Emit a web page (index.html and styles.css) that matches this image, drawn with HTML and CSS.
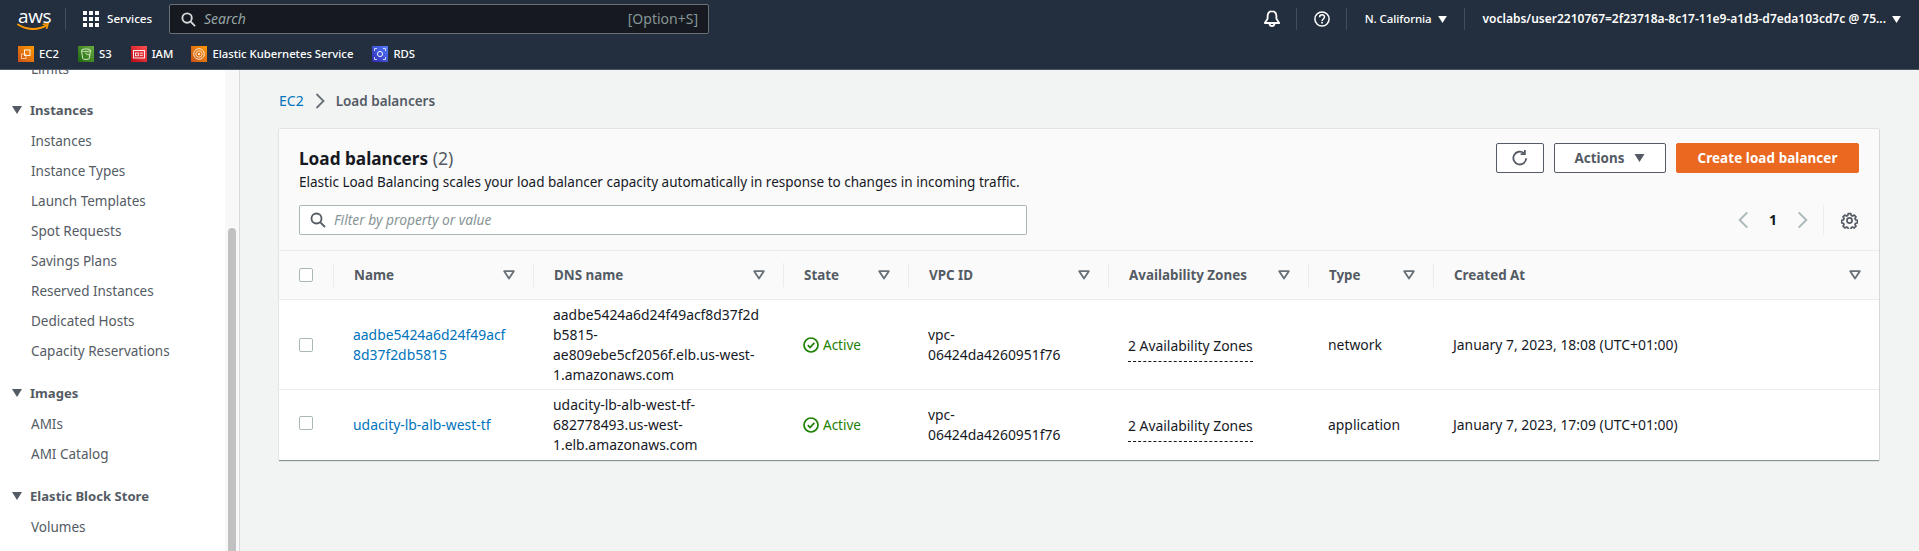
FILE: index.html
```html
<!DOCTYPE html>
<html lang="en">
<head>
<meta charset="utf-8">
<title>Load balancers | EC2</title>
<link rel="stylesheet" href="styles.css">
</head>
<body>
<svg class="defs" width="0" height="0" aria-hidden="true">
  <defs>
    <linearGradient id="g-orange" x1="0" y1="1" x2="1" y2="0"><stop offset="0" stop-color="#c8511b"/><stop offset="1" stop-color="#ff9900"/></linearGradient>
    <linearGradient id="g-green" x1="0" y1="1" x2="1" y2="0"><stop offset="0" stop-color="#1b660f"/><stop offset="1" stop-color="#6cae3e"/></linearGradient>
    <linearGradient id="g-red" x1="0" y1="1" x2="1" y2="0"><stop offset="0" stop-color="#bd0816"/><stop offset="1" stop-color="#ff5252"/></linearGradient>
    <linearGradient id="g-blue" x1="0" y1="1" x2="1" y2="0"><stop offset="0" stop-color="#2e27ad"/><stop offset="1" stop-color="#527fff"/></linearGradient>
    <symbol id="i-sort" viewBox="0 0 12 10"><path d="M1.2 1.2h9.6L6 8.6z" fill="none" stroke="#687078" stroke-width="1.8" stroke-linejoin="round"/></symbol>
    <symbol id="i-check" viewBox="0 0 16 16"><circle cx="8" cy="8" r="7" fill="none" stroke="#1d8102" stroke-width="1.7"/><path d="M4.8 8.2l2.3 2.3 4.2-4.6" fill="none" stroke="#1d8102" stroke-width="1.7"/></symbol>
  </defs>
</svg>

<header class="topbar">
  <div class="topbar-row">
    <div class="logo">
      <span class="logo-text">aws</span>
      <svg class="logo-smile" viewBox="0 0 32 9"><path d="M1 1.5c8 5.4 20 6 28 1.2" fill="none" stroke="#f90" stroke-width="2" stroke-linecap="round"/><path d="M26.300 1.200l4.700-.4-1.300 4.500" fill="none" stroke="#f90" stroke-width="1.600" stroke-linecap="round"/></svg>
    </div>
    <span class="nav-sep sep-logo"></span>
    <svg class="grid-icon" viewBox="0 0 16 16" fill="#fff">
      <rect x="0" y="0" width="4" height="4"/><rect x="6" y="0" width="4" height="4"/><rect x="12" y="0" width="4" height="4"/>
      <rect x="0" y="6" width="4" height="4"/><rect x="6" y="6" width="4" height="4"/><rect x="12" y="6" width="4" height="4"/>
      <rect x="0" y="12" width="4" height="4"/><rect x="6" y="12" width="4" height="4"/><rect x="12" y="12" width="4" height="4"/>
    </svg>
    <span class="services">Services</span>
    <div class="search">
      <svg class="search-icon" viewBox="0 0 16 16"><circle cx="6.500" cy="6.500" r="5" fill="none" stroke="#d5dbdb" stroke-width="2"/><path d="M10.300 10.300l4.700 4.700" stroke="#d5dbdb" stroke-width="2"/></svg>
      <span class="search-text">Search</span>
      <span class="search-key">[Option+S]</span>
    </div>
    <div class="top-right">
      <svg class="bell" viewBox="0 0 18 18"><path d="M9 1.200c-2.900 0-4.400 2.200-4.400 5v2.600L1.800 13h14.400l-2.800-4.200V6.200c0-2.800-1.500-5-4.400-5z" fill="none" stroke="#fff" stroke-width="1.800" stroke-linejoin="round"/><path d="M6.500 13.500a2.500 2.500 0 0 0 5 0" fill="none" stroke="#fff" stroke-width="1.800"/></svg>
      <span class="nav-sep sep-bell"></span>
      <svg class="help" viewBox="0 0 16 16"><circle cx="8" cy="8" r="7.100" fill="none" stroke="#fff" stroke-width="1.500"/><path d="M5.600 6.200c0-3.100 4.900-3.100 4.900-.1 0 1.900-2.400 1.900-2.400 3.800" fill="none" stroke="#fff" stroke-width="1.500"/><rect x="7.200" y="10.800" width="1.700" height="1.700" fill="#fff"/></svg>
      <span class="nav-sep sep-help"></span>
      <span class="region">N. California</span>
      <svg class="caret" viewBox="0 0 10 8"><path d="M0 0h10L5 8z" fill="#fff"/></svg>
      <span class="nav-sep sep-region"></span>
      <span class="account">voclabs/user2210767=2f23718a-8c17-11e9-a1d3-d7eda103cd7c @ 75...</span>
      <svg class="caret" viewBox="0 0 10 8"><path d="M0 0h10L5 8z" fill="#fff"/></svg>
    </div>
  </div>
  <div class="fav-row">
    <span class="fav fav-ec2">
      <svg class="fav-icon" viewBox="0 0 16 16"><rect width="16" height="16" fill="url(#g-orange)"/><rect x="6.500" y="4" width="5.500" height="5.500" fill="none" stroke="#fff" stroke-width=".9"/><rect x="3.500" y="8" width="4.500" height="4.500" fill="none" stroke="#ffd9b8" stroke-width=".8"/></svg>
      EC2
    </span>
    <span class="fav fav-s3">
      <svg class="fav-icon" viewBox="0 0 16 16"><rect width="16" height="16" fill="url(#g-green)"/><path d="M3.500 4.500c0-2 9-2 9 0l-1.200 8c-.3 1.300-6.300 1.300-6.600 0z" fill="none" stroke="#e6f3da" stroke-width=".9"/><path d="M3.500 4.500c1.500 1.500 7.500 1.500 9 0M7.500 7.500l4.500 1.800" fill="none" stroke="#e6f3da" stroke-width=".8"/></svg>
      S3
    </span>
    <span class="fav fav-iam">
      <svg class="fav-icon" viewBox="0 0 16 16"><rect width="16" height="16" fill="url(#g-red)"/><rect x="2.500" y="4.500" width="11" height="7.500" fill="none" stroke="#fff" stroke-width=".9"/><rect x="4.500" y="7" width="2.800" height="2.800" fill="none" stroke="#fff" stroke-width=".8"/><path d="M8.800 7.200h3M8.800 9.400h3" stroke="#fff" stroke-width=".8"/></svg>
      IAM
    </span>
    <span class="fav fav-eks">
      <svg class="fav-icon" viewBox="0 0 16 16"><rect width="16" height="16" fill="url(#g-orange)"/><circle cx="8" cy="8" r="5.300" fill="none" stroke="#ffe6d0" stroke-width="1"/><circle cx="8" cy="8" r="3.200" fill="none" stroke="#ffe6d0" stroke-width=".9"/><circle cx="8" cy="8" r="1.200" fill="#ffe6d0"/></svg>
      Elastic Kubernetes Service
    </span>
    <span class="fav">
      <svg class="fav-icon" viewBox="0 0 16 16"><rect width="16" height="16" fill="url(#g-blue)"/><circle cx="8" cy="8" r="2.600" fill="none" stroke="#fff" stroke-width=".9"/><path d="M2.500 5V2.500H5M11 2.500h2.500V5M13.500 11v2.500H11M5 13.500H2.500V11" fill="none" stroke="#dfe6ff" stroke-width=".9"/></svg>
      RDS
    </span>
  </div>
</header>

<div class="layout">
  <nav class="sidebar">
    <div class="side-scroll">
      <a class="side-item cut">Limits</a>
      <div class="side-head"><span class="tri"></span>Instances</div>
      <a class="side-item">Instances</a>
      <a class="side-item">Instance Types</a>
      <a class="side-item">Launch Templates</a>
      <a class="side-item">Spot Requests</a>
      <a class="side-item">Savings Plans</a>
      <a class="side-item">Reserved Instances</a>
      <a class="side-item">Dedicated Hosts</a>
      <a class="side-item">Capacity Reservations</a>
      <div class="side-head spaced"><span class="tri"></span>Images</div>
      <a class="side-item">AMIs</a>
      <a class="side-item">AMI Catalog</a>
      <div class="side-head spaced"><span class="tri"></span>Elastic Block Store</div>
      <a class="side-item">Volumes</a>
    </div>
  </nav>
  <div class="scroll-track"><div class="scroll-thumb"></div></div>

  <main class="main">
    <div class="crumbs">
      <a class="crumb-link">EC2</a>
      <svg class="crumb-chev" viewBox="0 0 10 16"><path d="M1.500 1l7 7-7 7" fill="none" stroke="#687078" stroke-width="1.800"/></svg>
      <span class="crumb-cur">Load balancers</span>
    </div>

    <section class="card">
      <div class="card-head">
        <div class="head-top">
          <div class="head-copy">
            <h1 class="title">Load balancers <span class="count">(2)</span></h1>
            <p class="desc">Elastic Load Balancing scales your load balancer capacity automatically in response to changes in incoming traffic.</p>
          </div>
          <div class="actions">
            <button class="btn btn-icon">
              <svg class="refresh" viewBox="0 0 16 16"><path d="M13.500 8.200a5.700 5.700 0 1 1-2-4.500" fill="none" stroke="#545b64" stroke-width="1.600"/><path d="M12.300 .8v3.700H8.600" fill="none" stroke="#545b64" stroke-width="1.600"/></svg>
            </button>
            <button class="btn btn-actions">Actions
              <svg class="btn-caret" viewBox="0 0 10 8"><path d="M0 0h10L5 8z" fill="#545b64"/></svg>
            </button>
            <button class="btn btn-primary">Create load balancer</button>
          </div>
        </div>
        <div class="head-tools">
          <div class="filter">
            <svg class="filter-icon" viewBox="0 0 16 16"><circle cx="6.500" cy="6.500" r="5" fill="none" stroke="#545b64" stroke-width="1.800"/><path d="M10.300 10.300l4.700 4.700" stroke="#545b64" stroke-width="1.800"/></svg>
            <span class="filter-text">Filter by property or value</span>
          </div>
          <div class="pager">
            <svg class="pg-chev" viewBox="0 0 10 16"><path d="M8.500 1l-7 7 7 7" fill="none" stroke="#aab7b8" stroke-width="1.700"/></svg>
            <span class="pg-num">1</span>
            <svg class="pg-chev" viewBox="0 0 10 16"><path d="M1.500 1l7 7-7 7" fill="none" stroke="#aab7b8" stroke-width="1.700"/></svg>
            <span class="pg-sep"></span>
            <svg class="gear" viewBox="0 0 16 16"><path d="M6.700 1h2.600l.4 1.900 1.300.6 1.700-1 1.800 1.800-1 1.700.6 1.300 1.900.4v2.600l-1.900.4-.6 1.300 1 1.700-1.800 1.800-1.700-1-1.300.6-.4 1.900H6.700l-.4-1.900-1.300-.6-1.700 1-1.800-1.800 1-1.700-.6-1.300-1.900-.4V7.700l1.900-.4.6-1.300-1-1.700 1.800-1.800 1.700 1 1.300-.6z" transform="translate(.5 .5) scale(.94)" fill="none" stroke="#545b64" stroke-width="1.700" stroke-linejoin="round"/><circle cx="8" cy="8" r="2.400" fill="none" stroke="#545b64" stroke-width="1.600"/></svg>
          </div>
        </div>
      </div>

      <table class="table">
        <colgroup>
          <col class="c-check"><col class="c-name"><col class="c-dns"><col class="c-state"><col class="c-vpc"><col class="c-az"><col class="c-type"><col>
        </colgroup>
        <thead>
          <tr>
            <th class="th-check"><span class="checkbox"></span></th>
            <th><div class="th-in">Name<svg class="sort"><use href="#i-sort"/></svg></div></th>
            <th><div class="th-in">DNS name<svg class="sort"><use href="#i-sort"/></svg></div></th>
            <th><div class="th-in">State<svg class="sort"><use href="#i-sort"/></svg></div></th>
            <th><div class="th-in">VPC ID<svg class="sort"><use href="#i-sort"/></svg></div></th>
            <th><div class="th-in">Availability Zones<svg class="sort"><use href="#i-sort"/></svg></div></th>
            <th><div class="th-in">Type<svg class="sort"><use href="#i-sort"/></svg></div></th>
            <th><div class="th-in">Created At<svg class="sort"><use href="#i-sort"/></svg></div></th>
          </tr>
        </thead>
        <tbody>
          <tr>
            <td class="td-check"><span class="checkbox"></span></td>
            <td><a class="link">aadbe5424a6d24f49acf<br>8d37f2db5815</a></td>
            <td>aadbe5424a6d24f49acf8d37f2d<br>b5815-<br>ae809ebe5cf2056f.elb.us-west-<br>1.amazonaws.com</td>
            <td><span class="status"><svg class="status-icon"><use href="#i-check"/></svg>Active</span></td>
            <td>vpc-<br>06424da4260951f76</td>
            <td><span class="az">2 Availability Zones</span></td>
            <td>network</td>
            <td>January 7, 2023, 18:08 (UTC+01:00)</td>
          </tr>
          <tr>
            <td class="td-check"><span class="checkbox"></span></td>
            <td><a class="link">udacity-lb-alb-west-tf</a></td>
            <td>udacity-lb-alb-west-tf-<br>682778493.us-west-<br>1.elb.amazonaws.com</td>
            <td><span class="status"><svg class="status-icon"><use href="#i-check"/></svg>Active</span></td>
            <td>vpc-<br>06424da4260951f76</td>
            <td><span class="az">2 Availability Zones</span></td>
            <td>application</td>
            <td>January 7, 2023, 17:09 (UTC+01:00)</td>
          </tr>
        </tbody>
      </table>
    </section>
  </main>
</div>
</body>
</html>
```
FILE: styles.css
```css
* { box-sizing: border-box; }
html, body { margin: 0; padding: 0; height: 100%; overflow: hidden; }
body {
  display: flex;
  flex-direction: column;
  background: #f2f3f3;
  color: #16191f;
  font-family: "Noto Sans", "Open Sans", sans-serif;
  font-size: 13.4px;
  line-height: 20px;
}
.defs { display: block; height: 0; }

/* top bar */
.topbar { flex: none; height: 70px; background: #232f3e; border-bottom: 1px solid #4b5664; color: #fff; }
.topbar-row { display: flex; align-items: center; height: 40px; padding: 0 0 2px 18px; }
.logo { position: relative; width: 30px; height: 24px; flex: none; }
.logo-text { display: block; font-family: "Open Sans", sans-serif; font-size: 19px; line-height: 18px; letter-spacing: -.4px; color: #fff; }
.logo-smile { position: absolute; left: -1px; top: 16px; width: 32px; height: 9px; }
.nav-sep { flex: none; width: 1px; height: 22px; background: #414d5c; }
.sep-logo { margin-left: 17px; }
.grid-icon { width: 16px; height: 16px; margin-left: 17px; flex: none; }
.services { flex: none; margin-left: 8px; width: 62px; font-size: 11.6px; font-weight: 500; }
.search { display: flex; align-items: center; width: 540px; height: 30px; padding: 0 10px 0 11px; background: #16191f; border: 1px solid #687078; border-radius: 2px; }
.search-icon { width: 15px; height: 15px; flex: none; }
.search-text { margin-left: 8px; font-style: italic; color: #95a5a6; font-size: 14px; flex: 1; }
.search-key { color: #879596; font-size: 14px; }
.top-right { display: flex; align-items: center; margin-left: auto; padding-right: 18px; }
.bell { width: 18px; height: 18px; flex: none; }
.sep-bell { margin-left: 15px; }
.help { width: 16px; height: 16px; margin-left: 17px; flex: none; }
.sep-help { margin-left: 16px; }
.region { margin-left: 18px; font-size: 11.5px; font-weight: 500; letter-spacing: -.1px; }
.caret { width: 9px; height: 7px; margin-left: 6px; flex: none; }
.sep-region { margin-left: 17px; }
.account { margin-left: 18px; font-size: 12px; font-weight: 600; white-space: nowrap; }
.fav-row { display: flex; align-items: center; height: 27px; padding-left: 18px; font-size: 11.3px; font-weight: 500; }
.fav { display: flex; align-items: center; gap: 5px; }
.fav-ec2 { margin-right: 19px; }
.fav-s3 { margin-right: 19px; }
.fav-iam { margin-right: 18px; }
.fav-eks { margin-right: 19px; }
.fav-icon { width: 16px; height: 16px; flex: none; }

/* page body */
.layout { flex: 1; display: flex; min-height: 0; overflow: hidden; }
.sidebar { flex: none; width: 225px; background: #fff; overflow: hidden; }
.side-scroll { margin-top: -16px; }
.side-item { display: block; height: 30px; line-height: 30px; padding-left: 31px; color: #545b64; font-size: 13.5px; white-space: nowrap; }
.side-head { display: flex; align-items: center; height: 30px; padding-left: 12px; margin: 11px 0 1px; color: #545b64; font-size: 13.1px; font-weight: 700; }
.side-head.spaced { margin-top: 12px; }
.tri { width: 0; height: 0; margin-right: 8px; border-left: 5.500px solid transparent; border-right: 5.500px solid transparent; border-top: 8px solid #545b64; }
.scroll-track { flex: none; width: 15px; padding: 158px 2px 0 3px; background: #f8f8f8; border-right: 1px solid #d5dbdb; }
.scroll-thumb { width: 8px; height: 400px; border-radius: 4px; background: #c1c1c1; }

/* main */
.main { flex: 1; min-width: 0; padding: 21px 40px 0 39px; }
.crumbs { display: flex; align-items: center; height: 20px; font-size: 13.5px; }
.crumb-link { color: #0073bb; font-size: 14px; }
.crumb-chev { width: 10px; height: 16px; margin: 0 11px; }
.crumb-cur { color: #545b64; font-weight: 600; }

.card { margin-top: 18px; background: #fff; border-bottom: 1px solid #879596; box-shadow: 0 0 1px 0 rgba(0,28,36,.4), 1px 0 1px -1px rgba(0,28,36,.3); }
.card-head { background: #fafafa; }
.head-top { display: flex; justify-content: space-between; height: 76px; padding: 14px 20px 0; }
.title { margin: 4px 0 0; font-size: 17.200px; line-height: 22px; font-weight: 700; color: #16191f; }
.count { font-weight: 400; font-size: 17.600px; color: #545b64; }
.desc { margin: 2px 0 0; font-size: 13.5px; line-height: 20px; color: #16191f; }
.actions { display: flex; gap: 10px; height: 30px; }
.btn { display: flex; align-items: center; justify-content: center; height: 30px; padding: 0; border: 1px solid #545b64; border-radius: 2px; background: #fff; color: #545b64; font: inherit; font-size: 13.4px; font-weight: 700; }
.btn-icon { width: 48px; }
.btn-actions { width: 112px; gap: 10px; }
.btn-caret { width: 11px; height: 8px; }
.btn-primary { width: 183px; background: #ea6820; border-color: #ea6820; color: #fff; letter-spacing: .1px; }
.refresh { width: 18px; height: 18px; }
.head-tools { display: flex; justify-content: space-between; height: 45px; padding: 0 20px; }
.filter { display: flex; align-items: center; width: 728px; height: 30px; padding: 0 10px; background: #fff; border: 1px solid #aab7b8; border-radius: 2px; }
.filter-icon { width: 16px; height: 16px; flex: none; }
.filter-text { margin-left: 8px; font-style: italic; color: #879596; font-size: 13.8px; }
.pager { display: flex; align-items: center; height: 30px; }
.pg-chev { width: 11px; height: 18px; }
.pg-num { width: 8px; margin: 0 20px; font-weight: 700; font-size: 14px; }
.pg-sep { width: 1px; height: 30px; margin: 0 17px 0 15px; background: #eaeded; }
.gear { width: 17px; height: 17px; margin-right: 1px; }

/* table */
.table { width: 100%; border-collapse: collapse; table-layout: fixed; }
.c-check { width: 54px; }
.c-name { width: 200px; }
.c-dns { width: 250px; }
.c-state { width: 125px; }
.c-vpc { width: 200px; }
.c-az { width: 200px; }
.c-type { width: 125px; }
th { height: 49px; padding: 0; background: #fafafa; border-top: 1px solid #eaeded; border-bottom: 1px solid #eaeded; text-align: left; font-weight: 700; color: #545b64; font-size: 13.4px; }
.th-in { display: flex; align-items: center; justify-content: space-between; height: 24px; padding: 0 18px 0 20px; border-left: 1px solid #eaeded; white-space: nowrap; }
.th-check, .td-check { padding: 0 0 0 20px; vertical-align: middle; }
.sort { width: 12px; height: 10px; flex: none; }
.checkbox { display: block; width: 14px; height: 14px; background: #fff; border: 1px solid #aab7b8; border-radius: 2px; }
td { padding: 5px 0 4px 20px; vertical-align: middle; font-size: 13.9px; line-height: 20px; color: #16191f; border-bottom: 1px solid #eaeded; white-space: nowrap; }
tbody tr:last-child td { padding-bottom: 5px; border-bottom: 0; }
.link { color: #0073bb; }
.status { display: flex; align-items: center; color: #1d8102; font-size: 13.5px; }
.status-icon { width: 16px; height: 16px; margin-right: 4px; flex: none; }
.az { display: inline-block; line-height: 20px; padding: 7px 0 5px; border-bottom: 1px dashed #16191f; }
```
